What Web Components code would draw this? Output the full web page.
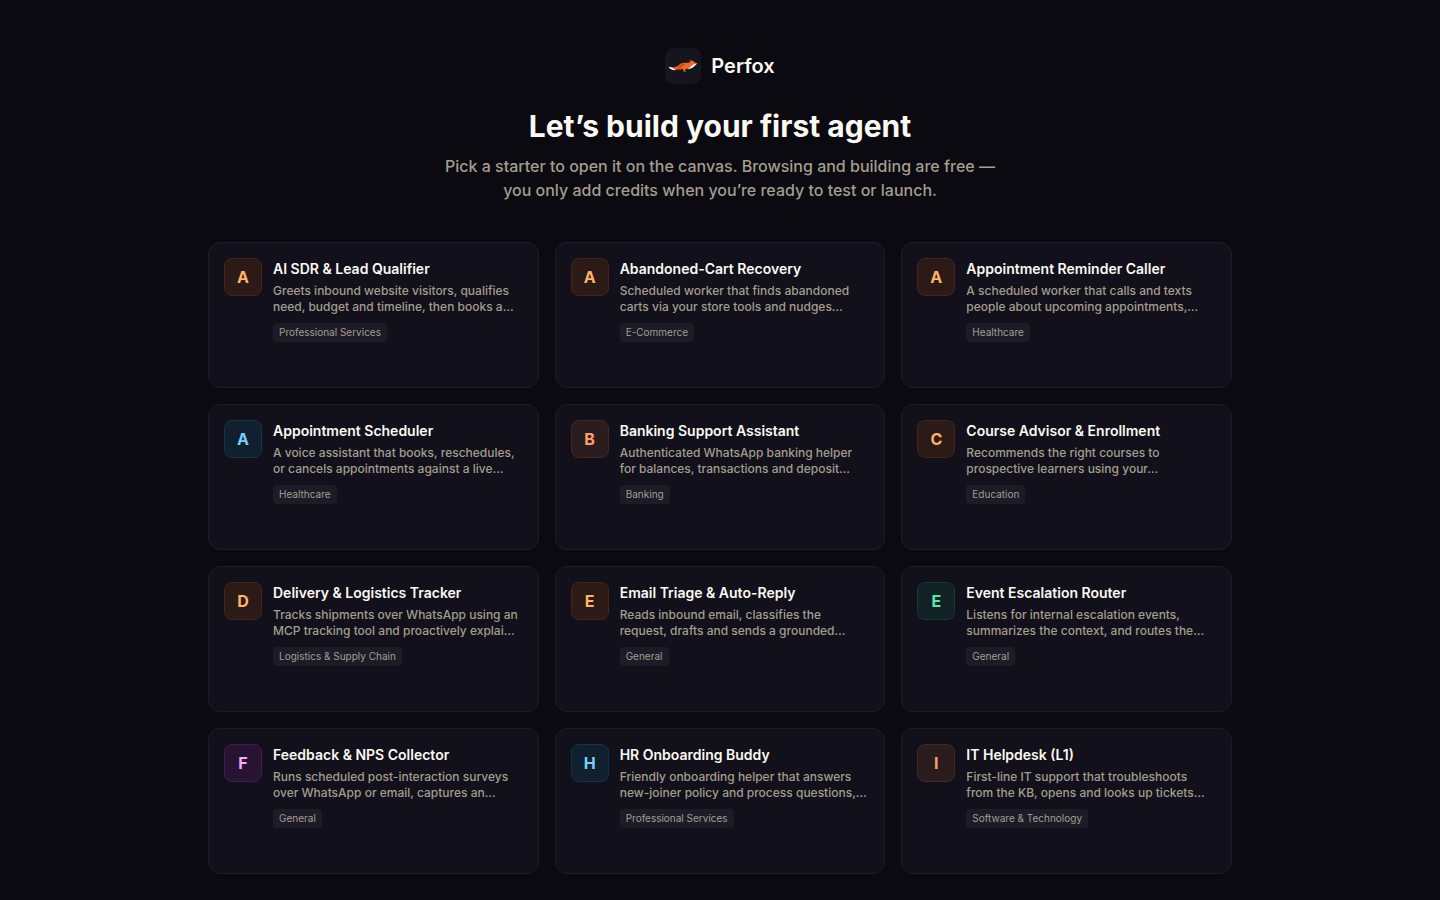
<!DOCTYPE html>
<html lang="en">
<head>
<meta charset="utf-8">
<meta name="viewport" content="width=device-width, initial-scale=1">
<title>Perfox</title>
<style>
  html { background: #0b0a10; }
  body { margin: 0; font-family: Inter, "Liberation Sans", sans-serif; color: #faf9f2; }
</style>
</head>
<body>
<starter-page></starter-page>
<script>
class PerfoxBrand extends HTMLElement {
  constructor() {
    super();
    this.attachShadow({ mode: 'open' }).innerHTML = `
      <style>
        :host { display: flex; align-items: center; gap: 10px; font-size: 20px; line-height: 28px; font-weight: 600; }
        .tile { display: flex; width: 36px; height: 36px; border-radius: 8px; background: #16141f; }
        svg { display: block; width: 36px; height: 36px; }
      </style>
      <span class="tile"><svg viewBox="0 0 36 36" aria-hidden="true">
        <path d="M7 19.500C10 19.800 12 18.500 14 17C16 15 18.500 14.400 21.500 14.800C23.500 14.800 25 14.300 26 13.800L23.800 12.200L28 12.800L29 14L32.300 15.400L31 16.500C28.500 17 26.500 18.600 24.500 20L20.500 21.300L20 22.800L21 23.800L18.500 23.600L18.300 21.300L16.500 21L13.500 22.500L15 20.800C13 20.800 12 22 9.500 22.200Z" fill="#f26a21"/>
        <path d="M14 17.500C16 15.500 18 15.200 20 15.500C19 18 17 19.500 15 20.500C13 20.500 12 21.500 9.800 22.200C11.500 21 13 19.500 14 17.500Z" fill="#d94c12"/>
        <path d="M3.500 18.600C5 19.300 6.200 19.300 7.400 19.500L8.300 20.600L10.500 22C7 22.600 4.500 21 3.500 18.600Z" fill="#fff"/>
        <path d="M32 15.600L30.500 17C28.500 19.500 26 20.800 22.300 21.400C24.500 20.300 26 18 28.500 16.600Z" fill="#fff"/>
      </svg></span>
      <span>Perfox</span>`;
  }
}
customElements.define('perfox-brand', PerfoxBrand);

class StarterCard extends HTMLElement {
  constructor() {
    super();
    this.attachShadow({ mode: 'open' }).innerHTML = `
      <style>
        :host { display: block; --fill: #2c1a17; --edge: #472417; --ink: #fdb466; }
        :host([tone="coral"]) { --fill: #2b1d1e; --edge: #45271f; --ink: #ff9d6e; }
        :host([tone="sky"]) { --fill: #10202f; --edge: #12334a; --ink: #75d0fb; }
        :host([tone="green"]) { --fill: #112225; --edge: #133a36; --ink: #5fe3ac; }
        :host([tone="pink"]) { --fill: #281432; --edge: #401a4c; --ink: #f0abfc; }
        button { display: flex; align-items: flex-start; gap: 11px; box-sizing: border-box; width: 100%; min-height: 146px;
          margin: 0; padding: 15px; border: 1px solid #1e1b29; border-radius: 12px; background: #12101a;
          color: inherit; font: inherit; text-align: left; cursor: pointer; }
        .mark { flex: none; display: flex; align-items: center; justify-content: center; box-sizing: border-box;
          width: 38px; height: 38px; border: 1px solid var(--edge); border-radius: 8px;
          background: var(--fill); color: var(--ink); font-size: 16px; line-height: 24px; font-weight: 700; }
        .body { flex: 1; min-width: 0; display: flex; flex-direction: column; align-items: flex-start; }
        .title { font-size: 14px; line-height: 20px; font-weight: 600; padding-top: 1px; white-space: nowrap; }
        .text { margin-top: 4px; font-size: 12px; line-height: 16px; font-weight: 500; color: #a39e8e; white-space: pre; }
        .tag { margin-top: 8px; padding: 2px 6px; border-radius: 4px; background: #1e1b29;
          color: #a39e8e; font-size: 10px; line-height: 15px; white-space: nowrap; }
      </style>
      <button type="button">
        <span class="mark"></span>
        <span class="body">
          <span class="title"><slot name="title"></slot></span>
          <span class="text"><slot></slot></span>
          <span class="tag"><slot name="tag"></slot></span>
        </span>
      </button>`;
  }
  connectedCallback() {
    this.shadowRoot.querySelector('.mark').textContent = this.getAttribute('mark');
  }
}
customElements.define('starter-card', StarterCard);

const starters = [
  ['A', 'orange', 'AI SDR & Lead Qualifier', 'Greets inbound website visitors, qualifies\nneed, budget and timeline, then books a…', 'Professional Services'],
  ['A', 'orange', 'Abandoned-Cart Recovery', 'Scheduled worker that finds abandoned\ncarts via your store tools and nudges…', 'E-Commerce'],
  ['A', 'orange', 'Appointment Reminder Caller', 'A scheduled worker that calls and texts\npeople about upcoming appointments,…', 'Healthcare'],
  ['A', 'sky', 'Appointment Scheduler', 'A voice assistant that books, reschedules,\nor cancels appointments against a live…', 'Healthcare'],
  ['B', 'coral', 'Banking Support Assistant', 'Authenticated WhatsApp banking helper\nfor balances, transactions and deposit…', 'Banking'],
  ['C', 'orange', 'Course Advisor & Enrollment', 'Recommends the right courses to\nprospective learners using your…', 'Education'],
  ['D', 'orange', 'Delivery & Logistics Tracker', 'Tracks shipments over WhatsApp using an\nMCP tracking tool and proactively explai…', 'Logistics & Supply Chain'],
  ['E', 'orange', 'Email Triage & Auto-Reply', 'Reads inbound email, classifies the\nrequest, drafts and sends a grounded…', 'General'],
  ['E', 'green', 'Event Escalation Router', 'Listens for internal escalation events,\nsummarizes the context, and routes the…', 'General'],
  ['F', 'pink', 'Feedback & NPS Collector', 'Runs scheduled post-interaction surveys\nover WhatsApp or email, captures an…', 'General'],
  ['H', 'sky', 'HR Onboarding Buddy', 'Friendly onboarding helper that answers\nnew-joiner policy and process questions,…', 'Professional Services'],
  ['I', 'coral', 'IT Helpdesk (L1)', 'First-line IT support that troubleshoots\nfrom the KB, opens and looks up tickets…', 'Software & Technology']
];

class StarterPage extends HTMLElement {
  constructor() {
    super();
    const root = this.attachShadow({ mode: 'open' });
    root.innerHTML = `
      <style>
        :host { display: block; padding: 48px 24px 26px; }
        main { max-width: 1024px; margin: 0 auto; }
        header { display: flex; flex-direction: column; align-items: center; text-align: center; }
        h1 { margin: 24px 0 0; font-size: 30px; line-height: 36px; font-weight: 700; }
        p { margin: 10px 0 0; font-size: 16px; line-height: 24px; font-weight: 500; color: #a39e8e; }
        .grid { display: grid; grid-template-columns: repeat(auto-fit, minmax(300px, 1fr)); gap: 16px; margin-top: 40px; }
      </style>
      <main>
        <header>
          <perfox-brand></perfox-brand>
          <h1>Let’s build your first agent</h1>
          <p>Pick a starter to open it on the canvas. Browsing and building are free —<br>you only add credits when you’re ready to test or launch.</p>
        </header>
        <div class="grid"></div>
      </main>`;
    const grid = root.querySelector('.grid');
    for (const [mark, tone, title, text, tag] of starters) {
      const card = document.createElement('starter-card');
      card.setAttribute('mark', mark);
      card.setAttribute('tone', tone);
      const t = document.createElement('span');
      t.slot = 'title';
      t.textContent = title;
      const g = document.createElement('span');
      g.slot = 'tag';
      g.textContent = tag;
      card.append(t, text, g);
      grid.append(card);
    }
  }
}
customElements.define('starter-page', StarterPage);
</script>
</body>
</html>
